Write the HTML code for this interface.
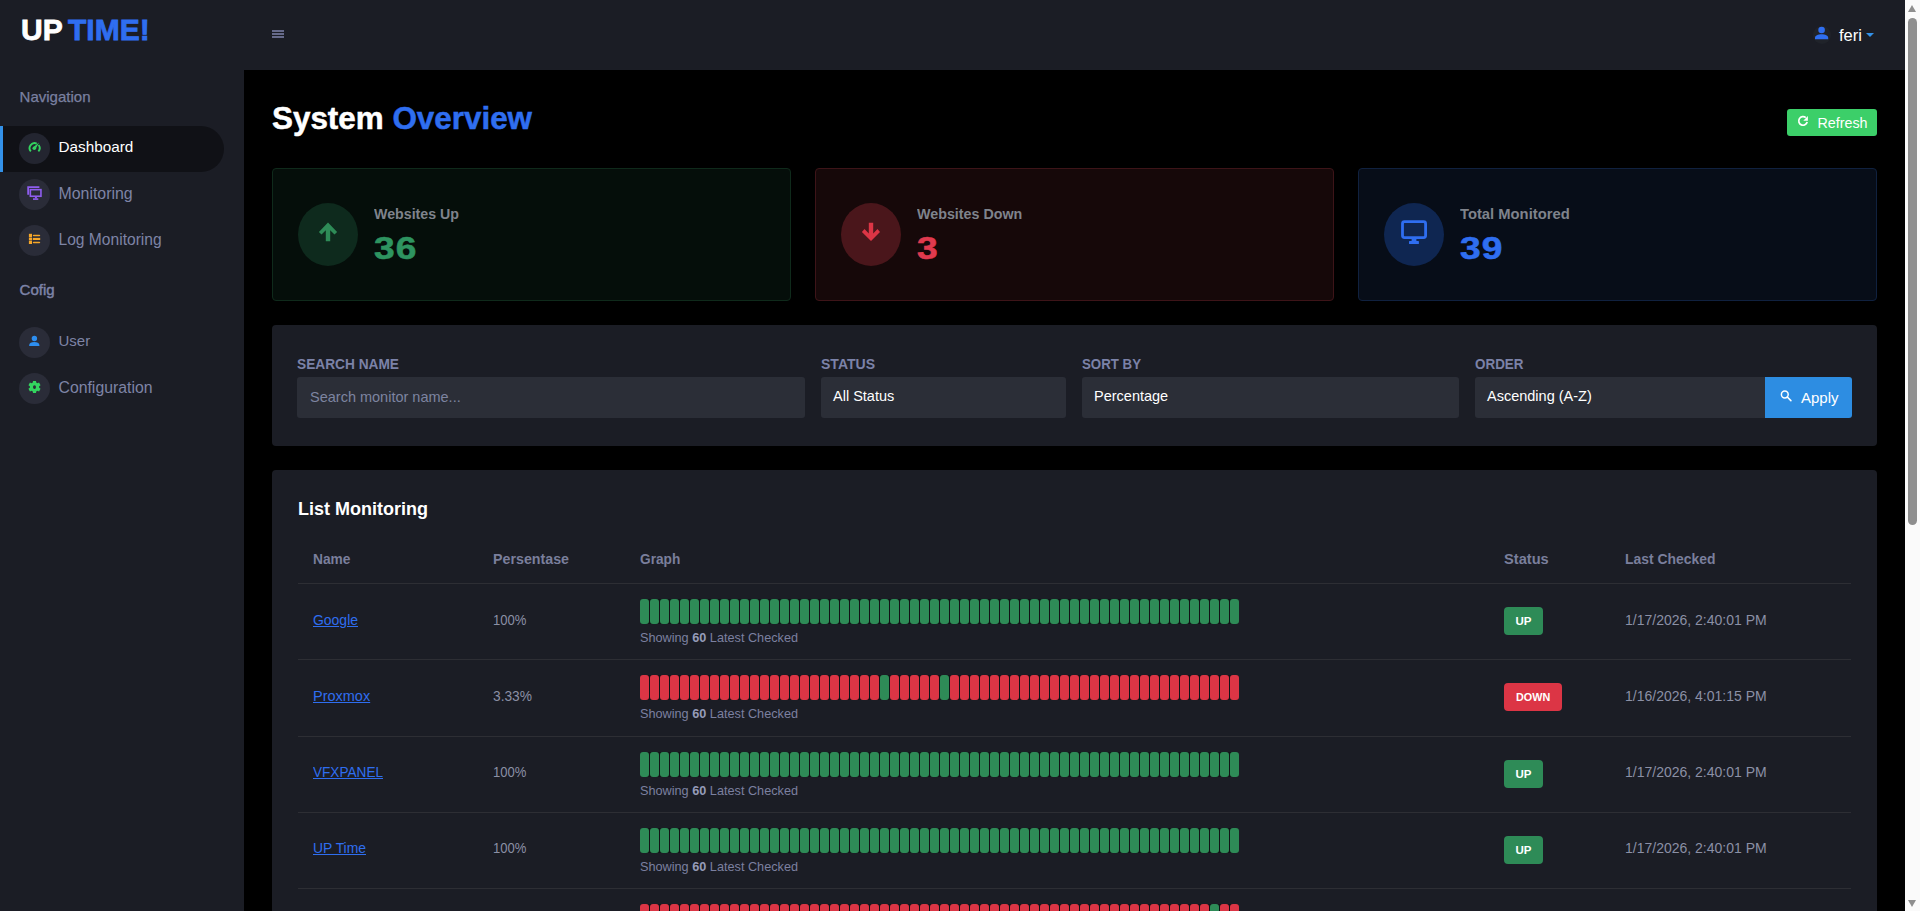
<!DOCTYPE html>
<html><head><meta charset="utf-8"><style>
*{box-sizing:border-box;margin:0;padding:0}
html,body{width:1920px;height:911px;overflow:hidden;background:#000;font-family:"Liberation Sans",sans-serif;}
.abs{position:absolute;overflow:visible}
#side{position:absolute;left:0;top:0;width:244px;height:911px;background:#1b1d25}
#top{position:absolute;left:244px;top:0;width:1661px;height:70px;background:#1b1d25}
#sb{position:absolute;left:1905px;top:0;width:15px;height:911px;background:#fafafa}
.t{position:absolute;white-space:nowrap;line-height:20px;height:20px}
.logo{position:absolute;top:15.1px;font-size:30px;line-height:30px;font-weight:bold;white-space:nowrap;-webkit-text-stroke:0.8px currentColor}
.nlab{position:absolute;left:19.6px;font-size:15px;line-height:20px;color:#7a80a0;white-space:nowrap;-webkit-text-stroke:0.25px currentColor}
.pill{position:absolute;left:0;top:126px;width:224px;height:46px;background:#101116;border-radius:0 23px 23px 0}
.bar{position:absolute;left:0;top:126px;width:3px;height:46px;background:#3391e8}
.ic{position:absolute;left:19px;width:31px;height:31px;border-radius:50%;background:#2a2c38}
.tx{position:absolute;left:58.5px;font-size:15px;line-height:20px;color:#7e84a6;white-space:nowrap}
.card{position:absolute;top:168px;width:519px;height:133px;border:1px solid;border-radius:4px}
.circ{position:absolute;top:203px;width:60px;height:63px;border-radius:50%}
.lab{position:absolute;top:203.5px;font-size:15.5px;line-height:20px;font-weight:bold;color:#7f838c;white-space:nowrap;transform-origin:0 50%}
.num{position:absolute;top:228px;font-size:32px;line-height:40px;font-weight:bold;white-space:nowrap;letter-spacing:1px;transform:scaleX(1.16);transform-origin:0 0;-webkit-text-stroke:0.6px currentColor}
.panel{position:absolute;left:272px;width:1605px;background:#1b1d25;border-radius:4px}
.flab{position:absolute;top:354.4px;font-size:15.5px;line-height:20px;font-weight:bold;color:#7b82a8;white-space:nowrap;transform-origin:0 50%}
.inp{position:absolute;top:377px;height:41px;background:#2b2e37;border-radius:3px}
.inp span{position:absolute;left:12px;top:8.5px;font-size:14.5px;line-height:20px;color:#fff;white-space:nowrap}
.row{position:absolute;left:298px;width:1553px;height:76.25px;border-top:1px solid #2d2e34}
.row .nm{position:absolute;left:15px;top:25.7px;transform-origin:0 50%;font-size:15.5px;line-height:20px;color:#2f6ef0;text-decoration:underline;white-space:nowrap}
.row .pct{position:absolute;left:195px;top:25.7px;transform-origin:0 50%;font-size:15px;line-height:20px;color:#8b90a5;white-space:nowrap}
.row .bars{position:absolute;left:342px;top:15px;width:599px;height:25px;display:flex;gap:1px;background:#111216;border-radius:3px}
.row .bars i{display:block;width:9px;height:25px;border-radius:3px}
.row .bars i.g{background:#2e8b57}
.row .bars i.r{background:#dc3545}
.row .show{position:absolute;left:342px;top:44px;font-size:12.7px;line-height:20px;color:#7b80a0;white-space:nowrap}
.row .show b{color:#959bb8}
.badge{position:absolute;left:1206px;top:23px;height:28px;line-height:28px;padding:0 11.5px;border-radius:4px;font-size:11.5px;font-weight:bold;color:#fff}
.badge.up{background:#2e8b57}
.badge.down{background:#dc3545;font-size:10.8px;padding:0 12px}
.row .lc{position:absolute;left:1327px;top:25.7px;transform-origin:0 50%;transform:scaleX(0.903);font-size:15.5px;line-height:20px;color:#8b90a5;white-space:nowrap}
.th{position:absolute;top:549px;font-size:15.5px;line-height:20px;font-weight:bold;color:#7a7f9c;white-space:nowrap;transform-origin:0 50%}
</style></head><body>
<div id="side">
  <div class="logo" style="left:21px;color:#fff">UP</div>
  <div class="logo" style="left:68px;color:#2f6ef0">TIME!</div>
  <div class="nlab" style="top:86.9px">Navigation</div>
  <div class="pill"></div><div class="bar"></div>
  <div class="ic" style="top:133px;background:#232530"></div><svg class="abs" style="left:24px;top:138px" width="20" height="20" viewBox="24 138 20 20"><path d="M30.83 151.38 A5 5 0 0 1 36.71 143.57" fill="none" stroke="#33d45f" stroke-width="1.9"/><path d="M38.6 145.0 A5 5 0 0 1 38.37 151.38" fill="none" stroke="#33d45f" stroke-width="1.9"/><path d="M39.1 142.5 L35.46 149.25 L33.14 147.35 Z" fill="#33d45f"/><circle cx="34.3" cy="148.3" r="1.8" fill="#33d45f"/></svg>
  <div class="tx" style="top:137.3px;color:#fff;font-size:15.3px">Dashboard</div>
  <div class="ic" style="top:179px"></div><svg class="abs" style="left:24px;top:184px" width="20" height="20" viewBox="24 184 20 20"><path d="M39.4 187.1 H28.15 V194.8" fill="none" stroke="#8f5def" stroke-width="1.8"/><rect x="30.35" y="189.65" width="10.6" height="6.6" fill="none" stroke="#8f5def" stroke-width="1.6"/><rect x="34.9" y="196.5" width="2" height="2" fill="#8f5def"/><rect x="33" y="198.3" width="5.3" height="1.6" fill="#8f5def"/></svg>
  <div class="tx" style="top:183.5px;font-size:15.9px">Monitoring</div>
  <div class="ic" style="top:225px"></div><svg class="abs" style="left:24px;top:230px" width="20" height="20" viewBox="24 230 20 20"><rect x="28.9" y="233.8" width="3.1" height="3.2" fill="#f5a628"/><rect x="28.9" y="237.5" width="3.1" height="2.8" fill="#f5a628"/><rect x="28.9" y="240.7" width="3.1" height="3.3" fill="#f5a628"/><rect x="32.8" y="234.7" width="7.4" height="1.6" rx="0.8" fill="#f5a628"/><rect x="32.8" y="237.9" width="7.4" height="2.1" fill="#f5a628"/><rect x="32.8" y="241.7" width="7.4" height="1.6" rx="0.8" fill="#f5a628"/></svg>
  <div class="tx" style="top:229.6px;font-size:15.6px">Log Monitoring</div>
  <div class="nlab" style="top:280.3px;-webkit-text-stroke:0.45px currentColor;font-size:15px;color:#7e84a8">Cofig</div>
  <div class="ic" style="top:327px"></div><svg class="abs" style="left:24px;top:332px" width="20" height="20" viewBox="24 332 20 20"><circle cx="34.4" cy="338.5" r="2.7" fill="#2d8ef0"/><path d="M29.2 346.1 V345 C29.2 342.8 31.5 341.9 34.3 341.9 C37.1 341.9 39.4 342.8 39.4 345 V346.1 Z" fill="#2d8ef0"/></svg>
  <div class="tx" style="top:331.4px">User</div>
  <div class="ic" style="top:373px"></div><svg class="abs" style="left:24px;top:378px" width="20" height="20" viewBox="24 378 20 20"><path d="M36.18 382.61 L36.02 380.89 L32.98 380.89 L32.82 382.61 L31.54 383.35 L29.97 382.62 L28.44 385.26 L29.86 386.26 L29.86 387.74 L28.44 388.74 L29.97 391.38 L31.54 390.65 L32.82 391.39 L32.98 393.11 L36.02 393.11 L36.18 391.39 L37.46 390.65 L39.03 391.38 L40.56 388.74 L39.14 387.74 L39.14 386.26 L40.56 385.26 L39.03 382.62 L37.46 383.35Z M36.0 387 A1.5 1.875 0 1 0 33.0 387 A1.5 1.875 0 1 0 36.0 387Z" fill="#33d45f" fill-rule="evenodd"/></svg>
  <div class="tx" style="top:377.6px;font-size:15.8px">Configuration</div>
</div>
<div id="top">
  <div class="abs" style="left:28px;top:30px;width:12px;height:2px;background:#666a8a"></div>
  <div class="abs" style="left:28px;top:33px;width:12px;height:2px;background:#666a8a"></div>
  <div class="abs" style="left:28px;top:36px;width:12px;height:2px;background:#666a8a"></div>
</div>
<div class="abs" style="left:1813px;top:25.5px;width:18px;height:18px;border-radius:50%;background:#20232a"></div>
<svg class="abs" style="left:1810px;top:22px" width="24" height="24" viewBox="1810 22 24 24"><circle cx="1821.6" cy="30" r="3.3" fill="#2f6ef0"/><path d="M1815 39.2 V38 C1815 35.6 1818 34.3 1821.6 34.3 C1825.2 34.3 1828.2 35.6 1828.2 38 V39.2 Z" fill="#2f6ef0"/></svg>
<div class="t" style="left:1839px;top:24.5px;font-size:16.5px;color:#fff">feri</div>
<div class="abs" style="left:1866px;top:33px;width:0;height:0;border-left:4px solid transparent;border-right:4px solid transparent;border-top:4.5px solid #3391e8"></div>

<div class="t" style="left:272px;top:102.8px;height:32px;line-height:32px;font-size:31.4px;font-weight:bold;color:#fff;-webkit-text-stroke:0.5px currentColor">System <span style="color:#2f6ef0">Overview</span></div>
<div class="abs" style="left:1787px;top:109px;width:90px;height:27px;background:#3ccf69;border-radius:3px"></div>
<svg class="abs" style="left:1792px;top:110px" width="24" height="24" viewBox="1792 110 24 24"><path d="M1807.2 122.1 A4.3 4.3 0 1 1 1805.8 117.6" fill="none" stroke="#fff" stroke-width="1.7"/><path d="M1807.9 116.1 V120.8 H1803.3 Z" fill="#fff"/></svg>
<div class="t" style="left:1817.5px;top:113.3px;font-size:14.3px;color:#fff">Refresh</div>

<div class="card" style="left:272px;background:#050e0a;border-color:#0f2a1b"></div>
<div class="circ" style="left:298px;background:#0e2a1d"></div><svg class="abs" style="left:313px;top:219px" width="30" height="30" viewBox="313 219 30 30"><path d="M328 222.6 L337.1 231.9 L334.5 234.6 L330.2 230.3 V241.2 H325.8 V230.3 L321.5 234.6 L318.9 231.9 Z" fill="#2e8b57"/></svg>
<div class="lab" style="left:374px;transform:scaleX(0.917)">Websites Up</div>
<div class="num" style="left:374px;color:#2e9460">36</div>
<div class="card" style="left:815px;background:#160809;border-color:#3d1418"></div>
<div class="circ" style="left:841px;background:#4a161b"></div><svg class="abs" style="left:856px;top:219px" width="30" height="30" viewBox="856 219 30 30"><path d="M871 241.1 L880 231.9 L877.5 229.1 L873.2 233.5 V222.7 H868.8 V233.5 L864.5 229.1 L861.9 231.9 Z" fill="#dc3545"/></svg>
<div class="lab" style="left:917px;transform:scaleX(0.922)">Websites Down</div>
<div class="num" style="left:917px;color:#e03a4e">3</div>
<div class="card" style="left:1358px;background:#070d18;border-color:#10213f"></div>
<div class="circ" style="left:1384px;background:#0f2651"></div><svg class="abs" style="left:1399px;top:219px" width="30" height="30" viewBox="1399 219 30 30"><rect x="1402.5" y="221.7" width="23.1" height="15.9" rx="2" fill="none" stroke="#2f6ef0" stroke-width="2.8"/><rect x="1411.6" y="238.5" width="4.8" height="3" fill="#2f6ef0"/><rect x="1409" y="240.9" width="9.9" height="3" rx="0.5" fill="#2f6ef0"/></svg>
<div class="lab" style="left:1460px;transform:scaleX(0.953)">Total Monitored</div>
<div class="num" style="left:1460px;color:#2f6ef0">39</div>

<div class="panel" style="top:325px;height:121px"></div>
<div class="flab" style="left:297px;transform:scaleX(0.884)">SEARCH NAME</div>
<div class="flab" style="left:821px;transform:scaleX(0.905)">STATUS</div>
<div class="flab" style="left:1082px;transform:scaleX(0.857)">SORT BY</div>
<div class="flab" style="left:1475px;transform:scaleX(0.866)">ORDER</div>
<div class="inp" style="left:297px;width:508px"><span style="color:#7d84a0;left:13px;top:10px">Search monitor name...</span></div>
<div class="inp" style="left:821px;width:245px"><span>All Status</span></div>
<div class="inp" style="left:1082px;width:377px"><span>Percentage</span></div>
<div class="inp" style="left:1475px;width:290px;border-radius:3px 0 0 3px"><span>Ascending (A-Z)</span></div>
<div class="abs" style="left:1765px;top:377px;width:87px;height:41px;background:#2d8de2;border-radius:0 3px 3px 0"></div>
<svg class="abs" style="left:1776px;top:386px" width="20" height="20" viewBox="1776 386 20 20"><circle cx="1784.8" cy="394.5" r="3.4" fill="none" stroke="#fff" stroke-width="1.5"/><path d="M1787.3 397 L1790.9 400.6" stroke="#fff" stroke-width="1.6" stroke-linecap="round"/></svg>
<div class="t" style="left:1801px;top:387.5px;font-size:15px;color:#fff">Apply</div>

<div class="panel" style="top:470px;height:500px"></div>
<div class="t" style="left:298px;top:498.5px;font-size:18px;font-weight:bold;color:#fff">List Monitoring</div>
<div class="th" style="left:313px;transform:scaleX(0.888)">Name</div>
<div class="th" style="left:493px;transform:scaleX(0.919)">Persentase</div>
<div class="th" style="left:640px;transform:scaleX(0.883)">Graph</div>
<div class="th" style="left:1504px;transform:scaleX(0.944)">Status</div>
<div class="th" style="left:1625px;transform:scaleX(0.897)">Last Checked</div>
<div class="row" style="top:583.0px">
  <a class="nm" style="transform:scaleX(0.9)">Google</a><span class="pct" style="transform:scaleX(0.87)">100%</span>
  <div class="bars"><i class="g"></i><i class="g"></i><i class="g"></i><i class="g"></i><i class="g"></i><i class="g"></i><i class="g"></i><i class="g"></i><i class="g"></i><i class="g"></i><i class="g"></i><i class="g"></i><i class="g"></i><i class="g"></i><i class="g"></i><i class="g"></i><i class="g"></i><i class="g"></i><i class="g"></i><i class="g"></i><i class="g"></i><i class="g"></i><i class="g"></i><i class="g"></i><i class="g"></i><i class="g"></i><i class="g"></i><i class="g"></i><i class="g"></i><i class="g"></i><i class="g"></i><i class="g"></i><i class="g"></i><i class="g"></i><i class="g"></i><i class="g"></i><i class="g"></i><i class="g"></i><i class="g"></i><i class="g"></i><i class="g"></i><i class="g"></i><i class="g"></i><i class="g"></i><i class="g"></i><i class="g"></i><i class="g"></i><i class="g"></i><i class="g"></i><i class="g"></i><i class="g"></i><i class="g"></i><i class="g"></i><i class="g"></i><i class="g"></i><i class="g"></i><i class="g"></i><i class="g"></i><i class="g"></i><i class="g"></i></div>
  <div class="show">Showing <b>60</b> Latest Checked</div>
  <span class="badge up">UP</span>
  <span class="lc">1/17/2026, 2:40:01 PM</span>
</div><div class="row" style="top:659.25px">
  <a class="nm" style="transform:scaleX(0.935)">Proxmox</a><span class="pct" style="transform:scaleX(0.917)">3.33%</span>
  <div class="bars"><i class="r"></i><i class="r"></i><i class="r"></i><i class="r"></i><i class="r"></i><i class="r"></i><i class="r"></i><i class="r"></i><i class="r"></i><i class="r"></i><i class="r"></i><i class="r"></i><i class="r"></i><i class="r"></i><i class="r"></i><i class="r"></i><i class="r"></i><i class="r"></i><i class="r"></i><i class="r"></i><i class="r"></i><i class="r"></i><i class="r"></i><i class="r"></i><i class="g"></i><i class="r"></i><i class="r"></i><i class="r"></i><i class="r"></i><i class="r"></i><i class="g"></i><i class="r"></i><i class="r"></i><i class="r"></i><i class="r"></i><i class="r"></i><i class="r"></i><i class="r"></i><i class="r"></i><i class="r"></i><i class="r"></i><i class="r"></i><i class="r"></i><i class="r"></i><i class="r"></i><i class="r"></i><i class="r"></i><i class="r"></i><i class="r"></i><i class="r"></i><i class="r"></i><i class="r"></i><i class="r"></i><i class="r"></i><i class="r"></i><i class="r"></i><i class="r"></i><i class="r"></i><i class="r"></i><i class="r"></i></div>
  <div class="show">Showing <b>60</b> Latest Checked</div>
  <span class="badge down">DOWN</span>
  <span class="lc">1/16/2026, 4:01:15 PM</span>
</div><div class="row" style="top:735.5px">
  <a class="nm" style="transform:scaleX(0.877)">VFXPANEL</a><span class="pct" style="transform:scaleX(0.87)">100%</span>
  <div class="bars"><i class="g"></i><i class="g"></i><i class="g"></i><i class="g"></i><i class="g"></i><i class="g"></i><i class="g"></i><i class="g"></i><i class="g"></i><i class="g"></i><i class="g"></i><i class="g"></i><i class="g"></i><i class="g"></i><i class="g"></i><i class="g"></i><i class="g"></i><i class="g"></i><i class="g"></i><i class="g"></i><i class="g"></i><i class="g"></i><i class="g"></i><i class="g"></i><i class="g"></i><i class="g"></i><i class="g"></i><i class="g"></i><i class="g"></i><i class="g"></i><i class="g"></i><i class="g"></i><i class="g"></i><i class="g"></i><i class="g"></i><i class="g"></i><i class="g"></i><i class="g"></i><i class="g"></i><i class="g"></i><i class="g"></i><i class="g"></i><i class="g"></i><i class="g"></i><i class="g"></i><i class="g"></i><i class="g"></i><i class="g"></i><i class="g"></i><i class="g"></i><i class="g"></i><i class="g"></i><i class="g"></i><i class="g"></i><i class="g"></i><i class="g"></i><i class="g"></i><i class="g"></i><i class="g"></i><i class="g"></i></div>
  <div class="show">Showing <b>60</b> Latest Checked</div>
  <span class="badge up">UP</span>
  <span class="lc">1/17/2026, 2:40:01 PM</span>
</div><div class="row" style="top:811.75px">
  <a class="nm" style="transform:scaleX(0.896)">UP Time</a><span class="pct" style="transform:scaleX(0.87)">100%</span>
  <div class="bars"><i class="g"></i><i class="g"></i><i class="g"></i><i class="g"></i><i class="g"></i><i class="g"></i><i class="g"></i><i class="g"></i><i class="g"></i><i class="g"></i><i class="g"></i><i class="g"></i><i class="g"></i><i class="g"></i><i class="g"></i><i class="g"></i><i class="g"></i><i class="g"></i><i class="g"></i><i class="g"></i><i class="g"></i><i class="g"></i><i class="g"></i><i class="g"></i><i class="g"></i><i class="g"></i><i class="g"></i><i class="g"></i><i class="g"></i><i class="g"></i><i class="g"></i><i class="g"></i><i class="g"></i><i class="g"></i><i class="g"></i><i class="g"></i><i class="g"></i><i class="g"></i><i class="g"></i><i class="g"></i><i class="g"></i><i class="g"></i><i class="g"></i><i class="g"></i><i class="g"></i><i class="g"></i><i class="g"></i><i class="g"></i><i class="g"></i><i class="g"></i><i class="g"></i><i class="g"></i><i class="g"></i><i class="g"></i><i class="g"></i><i class="g"></i><i class="g"></i><i class="g"></i><i class="g"></i><i class="g"></i></div>
  <div class="show">Showing <b>60</b> Latest Checked</div>
  <span class="badge up">UP</span>
  <span class="lc">1/17/2026, 2:40:01 PM</span>
</div><div class="row" style="top:888.0px">
  <a class="nm" style="transform:scaleX(0.935)">Proxmox</a><span class="pct" style="transform:scaleX(0.917)">3.33%</span>
  <div class="bars"><i class="r"></i><i class="r"></i><i class="r"></i><i class="r"></i><i class="r"></i><i class="r"></i><i class="r"></i><i class="r"></i><i class="r"></i><i class="r"></i><i class="r"></i><i class="r"></i><i class="r"></i><i class="r"></i><i class="r"></i><i class="r"></i><i class="r"></i><i class="r"></i><i class="r"></i><i class="r"></i><i class="r"></i><i class="r"></i><i class="r"></i><i class="r"></i><i class="r"></i><i class="r"></i><i class="r"></i><i class="r"></i><i class="r"></i><i class="r"></i><i class="r"></i><i class="r"></i><i class="r"></i><i class="r"></i><i class="r"></i><i class="r"></i><i class="r"></i><i class="r"></i><i class="r"></i><i class="r"></i><i class="r"></i><i class="r"></i><i class="r"></i><i class="r"></i><i class="r"></i><i class="r"></i><i class="r"></i><i class="r"></i><i class="r"></i><i class="r"></i><i class="r"></i><i class="r"></i><i class="r"></i><i class="r"></i><i class="r"></i><i class="r"></i><i class="r"></i><i class="g"></i><i class="r"></i><i class="r"></i></div>
  <div class="show">Showing <b>60</b> Latest Checked</div>
  <span class="badge down">DOWN</span>
  <span class="lc">1/16/2026, 4:01:15 PM</span>
</div>

<div id="sb">
  <div class="abs" style="left:3px;top:5px;width:0;height:0;border-left:4.75px solid transparent;border-right:4.75px solid transparent;border-bottom:7px solid #8e8e8e"></div>
  <div class="abs" style="left:3px;top:18px;width:9px;height:507px;border-radius:4.5px;background:#8e8e8e"></div>
  <div class="abs" style="left:3px;top:900px;width:0;height:0;border-left:4.75px solid transparent;border-right:4.75px solid transparent;border-top:7px solid #8e8e8e"></div>
</div>
</body></html>
